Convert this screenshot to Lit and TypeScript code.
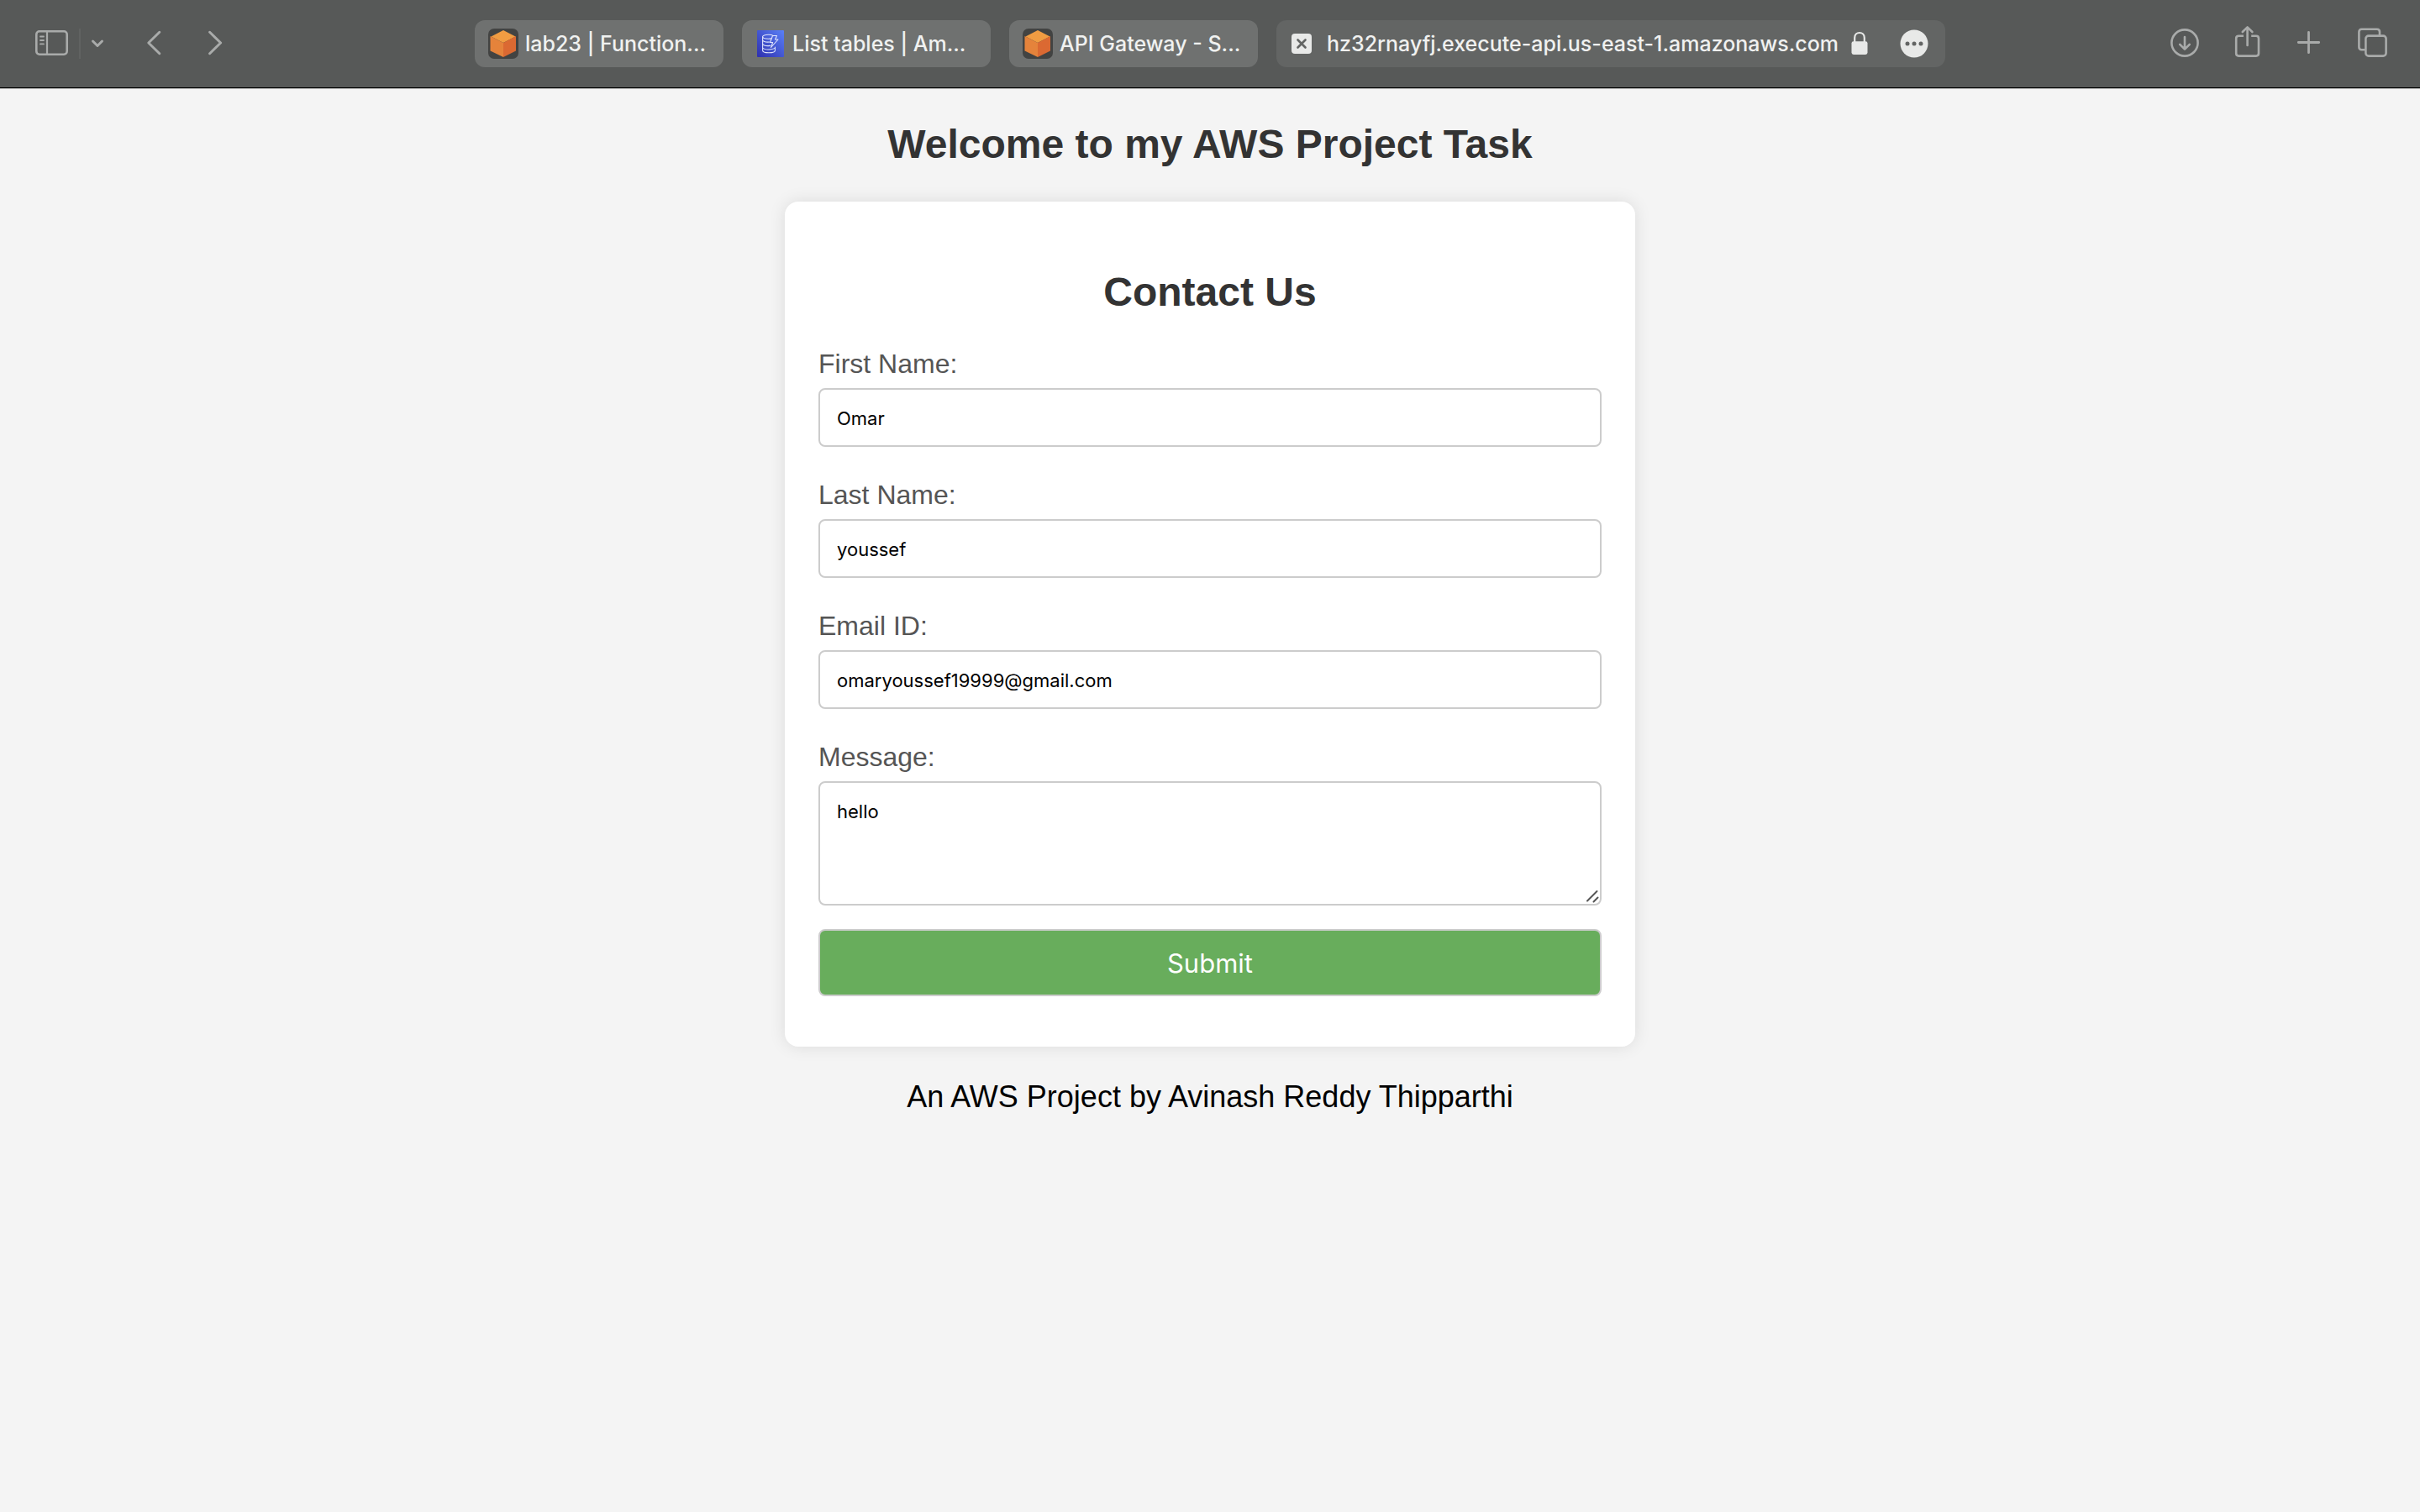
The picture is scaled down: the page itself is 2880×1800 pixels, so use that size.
import { LitElement, html, svg, css } from "lit";
import { customElement, property } from "lit/decorators.js";

const cubeIcon = svg`
  <svg width="36" height="36" viewBox="0 0 36 36" aria-hidden="true">
    <rect width="36" height="36" rx="7" fill="#424342" />
    <path d="M18 2 L32.5 9.5 L18 17 L3.5 9.5 Z" fill="#f09c42" />
    <path d="M2.5 9 L18 17 V34 L2.5 26.5 Z" fill="#e5833b" />
    <path d="M33 9 L18 17 V34 L33 26.5 Z" fill="#db6932" />
  </svg>`;

const tableIcon = svg`
  <svg width="36" height="36" viewBox="-2 -2 36 36" aria-hidden="true">
    <defs>
      <linearGradient id="dynamo" x1="0" y1="1" x2="1" y2="0">
        <stop offset="0" stop-color="#2e2fae" />
        <stop offset="1" stop-color="#5a80f6" />
      </linearGradient>
    </defs>
    <rect width="32" height="32" rx="1" fill="url(#dynamo)" />
    <g fill="none" stroke="#dfe4fd" stroke-width="1.1" stroke-linejoin="round" stroke-linecap="round">
      <path d="M19.5 6.6 C17.5 5.4 15.5 5.3 13.5 5.3 C9.5 5.3 6.6 6.4 6.6 7.8 C6.6 9.2 9.5 10.3 13.5 10.3 C15 10.3 16 10.2 17 9.9" />
      <path d="M6.6 7.8 V24 C6.6 25.6 9.5 26.8 14 26.8 C18.5 26.8 21.4 25.6 21.4 24 V20" />
      <path d="M6.6 12 C7.5 13.5 10.5 14.3 14.5 14" />
      <path d="M6.6 16.5 C7.5 18 11 18.9 15.5 18.4" />
      <path d="M6.6 21 C8 22.6 12 23.2 16 22.8 C18.5 22.6 20.5 22 21.4 21" />
      <path d="M18.5 6.5 H23.5 L21.5 11 H25 L16.5 20.5 L18.6 14.5 H15.5 Z" />
    </g>
  </svg>`;

const sidebarIcon = svg`
  <svg width="40" height="44" viewBox="0 0 40 44" fill="none" stroke="currentColor" stroke-width="2.6" stroke-linecap="round" aria-hidden="true">
    <rect x="1.3" y="7.3" width="36.4" height="27.4" rx="3.6" />
    <path d="M14 7.5 V34.5" stroke-width="2.2" />
    <path d="M6 13.5 H10 M6 18 H10 M6 22.4 H10" stroke-width="1.8" />
  </svg>`;

const menuIcon = svg`
  <svg width="24" height="44" viewBox="0 0 24 44" fill="none" stroke="currentColor" stroke-width="3" stroke-linecap="round" stroke-linejoin="round" aria-hidden="true">
    <path d="M6.5 19 L12 24.5 L17.5 19" />
  </svg>`;

const backIcon = svg`
  <svg width="40" height="44" viewBox="0 0 40 44" fill="none" stroke="currentColor" stroke-width="3" stroke-linecap="round" stroke-linejoin="round" aria-hidden="true">
    <path d="M27.8 8.3 L14.8 21 L27.8 33.7" />
  </svg>`;

const forwardIcon = svg`
  <svg width="40" height="44" viewBox="0 0 40 44" fill="none" stroke="currentColor" stroke-width="3" stroke-linecap="round" stroke-linejoin="round" aria-hidden="true">
    <path d="M13.6 8.3 L26.6 21 L13.6 33.7" />
  </svg>`;

const downloadIcon = svg`
  <svg width="40" height="44" viewBox="0 0 40 44" fill="none" stroke="currentColor" stroke-width="2.6" stroke-linecap="round" stroke-linejoin="round" aria-hidden="true">
    <circle cx="20" cy="21" r="15.600" />
    <path d="M20 14 V28.5 M14.2 22.8 L20 28.6 L25.8 22.8" />
  </svg>`;

const shareIcon = svg`
  <svg width="40" height="44" viewBox="0 0 40 44" fill="none" stroke="currentColor" stroke-width="2.6" stroke-linecap="round" stroke-linejoin="round" aria-hidden="true">
    <path d="M16 12.7 H10.2 Q7.2 12.7 7.2 15.7 V33.6 Q7.2 36.6 10.2 36.6 H31 Q34 36.6 34 33.6 V15.7 Q34 12.7 31 12.7 H25.2" stroke-linecap="butt" />
    <path d="M20.600 24 V3 M14.8 8 L20.600 2.4 L26.4 8" />
  </svg>`;

const plusIcon = svg`
  <svg width="40" height="44" viewBox="0 0 40 44" fill="none" stroke="currentColor" stroke-width="2.8" stroke-linecap="round" aria-hidden="true">
    <path d="M19.5 8.3 V32.7 M7.3 20.5 H31.7" />
  </svg>`;

const overviewIcon = svg`
  <svg width="40" height="44" viewBox="0 0 40 44" fill="none" stroke="currentColor" stroke-width="2.6" aria-hidden="true">
    <path d="M12.5 29.2 H8.6 Q5.4 29.2 5.4 26 V8 Q5.4 4.8 8.6 4.8 H26.8 Q30 4.8 30 8 V12" />
    <rect x="13.4" y="12.6" width="24.2" height="24" rx="3.4" />
  </svg>`;

const lockIcon = svg`
  <svg width="20" height="30" viewBox="0 0 20 30" aria-hidden="true">
    <path d="M4.2 14 V8 C4.2 4 6.8 2 10 2 C13.2 2 15.8 4 15.8 8 V14" fill="none" stroke="#e8e9e8" stroke-width="2.2" />
    <rect x="0.5" y="12.2" width="19" height="15.8" rx="2.4" fill="#e8e9e8" />
  </svg>`;

const closeIcon = svg`
  <svg width="24" height="24" viewBox="0 0 24 24" aria-hidden="true">
    <rect width="24" height="24" rx="4" fill="#e8e9e8" />
    <path d="M7.5 7.5 L16.5 16.5 M16.5 7.5 L7.5 16.5" stroke="#636564" stroke-width="2.6" stroke-linecap="round" />
  </svg>`;

const moreIcon = svg`
  <svg width="34" height="34" viewBox="0 0 34 34" aria-hidden="true">
    <circle cx="17" cy="17" r="16.5" fill="#e8e9e8" />
    <g fill="#636564">
      <circle cx="9" cy="17" r="2.5" />
      <circle cx="17" cy="17" r="2.5" />
      <circle cx="25" cy="17" r="2.5" />
    </g>
  </svg>`;

const buttonReset = css`
  button {
    display: flex;
    align-items: center;
    margin: 0;
    padding: 0;
    border: 0;
    background: none;
    color: inherit;
    font: inherit;
    cursor: pointer;
  }
  svg {
    display: block;
    flex: none;
  }
`;

const tabs = [
  { icon: cubeIcon, title: "lab23 | Function..." },
  { icon: tableIcon, title: "List tables | Am..." },
  { icon: cubeIcon, title: "API Gateway - S..." },
];

@customElement("browser-bar")
class BrowserBar extends LitElement {
  static styles = [
    buttonReset,
    css`
      :host {
        display: grid;
        grid-template-columns: minmax(max-content, 1fr) minmax(0, 1750px) minmax(max-content, 1fr);
        align-items: center;
        height: 104px;
        padding: 0 38px;
        border-bottom: 1px solid #000;
        box-shadow: 0 1px 0 #b5b6b5;
        background: #575958;
        color: #a9abaa;
        font-family: Inter, "Liberation Sans", sans-serif;
        font-size: 25px;
        font-weight: 500;
      }
      .group {
        display: flex;
        align-items: center;
        gap: 34px;
      }
      .start {
        padding-left: 4px;
      }
      .end {
        justify-content: flex-end;
      }
      .sidebar {
        display: flex;
        align-items: center;
        gap: 8px;
      }
      .divider {
        width: 2px;
        height: 36px;
        margin-left: 4px;
        background: #616362;
      }
      .strip {
        display: flex;
        gap: 22px;
        min-width: 0;
        color: #f0f1f0;
      }
      button.tab {
        flex: 0 1 296px;
        min-width: 0;
        height: 56px;
        padding: 0 16px;
        gap: 8px;
        border-radius: 12px;
        background: #6f7170;
        white-space: nowrap;
      }
      .address {
        display: flex;
        flex: 1 1 0;
        align-items: center;
        min-width: 0;
        height: 56px;
        padding: 0 20px 0 18px;
        box-sizing: border-box;
        border-radius: 12px;
        background: #636564;
      }
      .url {
        flex: 1 1 0;
        min-width: 0;
        margin: 0 8px 0 18px;
        padding: 0;
        border: 0;
        outline: 0;
        background: none;
        color: inherit;
        font: inherit;
      }
      .more {
        margin-left: 38px;
      }
    `,
  ];

  render() {
    return html`
      <div class="group start">
        <div class="sidebar">
          <button aria-label="Show sidebar">${sidebarIcon}</button>
          <span class="divider"></span>
          <button aria-label="Tab groups">${menuIcon}</button>
        </div>
        <button aria-label="Back">${backIcon}</button>
        <button aria-label="Forward">${forwardIcon}</button>
      </div>
      <nav class="strip" aria-label="Tabs">
        ${tabs.map((tab) => html`<button class="tab">${tab.icon}<span>${tab.title}</span></button>`)}
        <div class="address">
          <button aria-label="Close tab">${closeIcon}</button>
          <input class="url" type="text" aria-label="Address" .value=${"hz32rnayfj.execute-api.us-east-1.amazonaws.com"} />
          ${lockIcon}
          <button class="more" aria-label="Page menu">${moreIcon}</button>
        </div>
      </nav>
      <div class="group end">
        <button aria-label="Downloads">${downloadIcon}</button>
        <button aria-label="Share">${shareIcon}</button>
        <button aria-label="New tab">${plusIcon}</button>
        <button aria-label="Tab overview">${overviewIcon}</button>
      </div>
    `;
  }
}

interface Field {
  id: string;
  label: string;
  type: string;
  value: string;
}

@customElement("contact-form")
class ContactForm extends LitElement {
  @property({ attribute: false }) fields: Field[] = [
    { id: "first-name", label: "First Name:", type: "text", value: "Omar" },
    { id: "last-name", label: "Last Name:", type: "text", value: "youssef" },
    { id: "email", label: "Email ID:", type: "email", value: "omaryoussef19999@gmail.com" },
  ];

  static styles = css`
    :host {
      display: block;
      box-sizing: border-box;
      padding: 80px 40px 60px;
      border-radius: 16px;
      background: #fff;
      box-shadow: 0 0 20px rgba(0, 0, 0, 0.1);
    }
    .title {
      margin: 0 0 40px;
      color: #333;
      font-size: 48px;
      line-height: 56px;
      text-align: center;
    }
    .form {
      display: flex;
      flex-direction: column;
      gap: 40px;
    }
    .field {
      display: flex;
      flex-direction: column;
      gap: 12px;
    }
    .label {
      color: #555;
      font-size: 32px;
      line-height: 34px;
    }
    .control {
      display: block;
      width: 100%;
      box-sizing: border-box;
      margin: 0;
      padding: 21px 20px 19px;
      border: 2px solid #ccc;
      border-radius: 8px;
      outline: 0;
      background: #fff;
      color: #000;
      font-family: Inter, "Liberation Sans", sans-serif;
      font-size: 22px;
      line-height: 26px;
    }
    input.control {
      height: 70px;
    }
    .message {
      position: relative;
    }
    textarea.control {
      height: 148px;
      resize: none;
      overflow: auto;
    }
    .grip {
      position: absolute;
      right: 2px;
      bottom: 2px;
      pointer-events: none;
    }
    .actions {
      display: flex;
      flex-direction: column;
      gap: 28px;
    }
    button.control {
      background: #68ad5c;
      color: #fff;
      font-size: 31px;
      line-height: 36px;
      cursor: pointer;
    }
  `;

  render() {
    return html`
      <h2 class="title">Contact Us</h2>
      <form class="form" @submit=${(e: Event) => e.preventDefault()}>
        ${this.fields.map(
          (f) => html`
            <div class="field">
              <label class="label" for=${f.id}>${f.label}</label>
              <input class="control" id=${f.id} type=${f.type} .value=${f.value} />
            </div>
          `
        )}
        <div class="actions">
          <div class="field">
            <label class="label" for="message">Message:</label>
            <div class="message">
              <textarea class="control" id="message" rows="4" .value=${"hello"}></textarea>
              <svg class="grip" width="18" height="18" viewBox="0 0 18 18" fill="none" stroke="#555" stroke-width="2" stroke-linecap="round" aria-hidden="true">
                <path d="M3 14.5 L14.5 3 M10.5 15.5 L15.5 10.5" />
              </svg>
            </div>
          </div>
          <button class="control" type="submit">Submit</button>
        </div>
      </form>
    `;
  }
}

@customElement("app-root")
class AppRoot extends LitElement {
  static styles = css`
    :host {
      display: block;
      min-height: 100vh;
      background: #f4f4f4;
      font-family: Arial, "Liberation Sans", sans-serif;
    }
    .page {
      display: flex;
      flex-direction: column;
      align-items: center;
      gap: 40px;
      padding: 39px 40px;
    }
    .heading {
      margin: 0;
      color: #333;
      font-size: 48px;
      line-height: 56px;
    }
    .card {
      width: 100%;
      max-width: 1012px;
    }
    .credit {
      margin: 0;
      color: #000;
      font-size: 36px;
      line-height: 40px;
    }
  `;

  render() {
    return html`
      <browser-bar></browser-bar>
      <main class="page">
        <h1 class="heading">Welcome to my AWS Project Task</h1>
        <contact-form class="card"></contact-form>
        <p class="credit">An AWS Project by Avinash Reddy Thipparthi</p>
      </main>
    `;
  }
}
